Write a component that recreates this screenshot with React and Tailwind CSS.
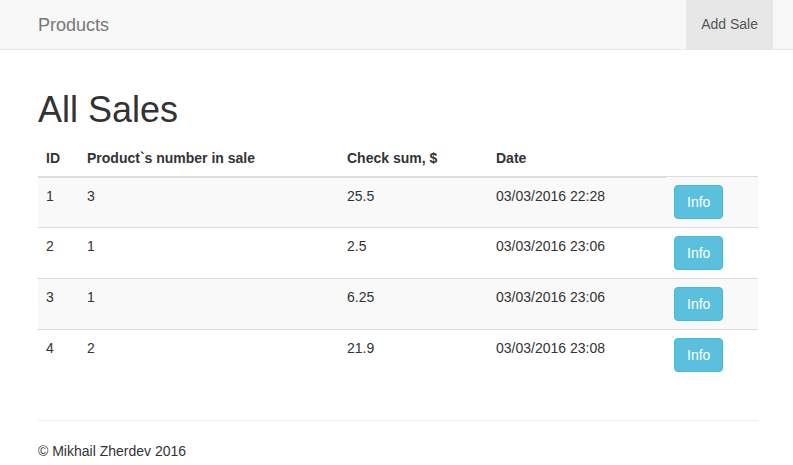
import React from "react";

const sales = [
  { id: 1, count: 3, sum: "25.5", date: "03/03/2016 22:28" },
  { id: 2, count: 1, sum: "2.5", date: "03/03/2016 23:06" },
  { id: 3, count: 1, sum: "6.25", date: "03/03/2016 23:06" },
  { id: 4, count: 2, sum: "21.9", date: "03/03/2016 23:08" },
];

const App = () => {
  return (
    <div className="min-h-[465px] bg-white text-[14px] leading-[20px] text-[#333] font-['Liberation_Sans',Arial,sans-serif]">
      {/* Navbar */}
      <nav className="h-[50px] bg-[#f8f8f8] border-b border-[#e7e7e7] flex justify-between pl-[23px] pr-[20px]">
        <a className="px-[15px] py-[15px] text-[18px] leading-[20px] text-[#777]">Products</a>
        <a className="px-[15px] py-[15px] leading-[19px] text-[#555] bg-[#e7e7e7]">Add Sale</a>
      </nav>

      <div className="ml-[38px] w-[720px] pt-[20px]">
        <h1 className="mt-[20px] mb-[10px] text-[36px] leading-[39.6px] font-normal">All Sales</h1>

        {/* Sales table */}
        <table className="w-full border-collapse">
          <thead>
            <tr>
              <th className="w-[41px] p-[8px] text-left font-bold align-bottom border-b-2 border-[#ddd]">ID</th>
              <th className="w-[260px] p-[8px] text-left font-bold align-bottom border-b-2 border-[#ddd]">Product`s number in sale</th>
              <th className="w-[149px] p-[8px] text-left font-bold align-bottom border-b-2 border-[#ddd]">Check sum, $</th>
              <th className="w-[178px] p-[8px] text-left font-bold align-bottom border-b-2 border-[#ddd]">Date</th>
            </tr>
          </thead>
          <tbody>
            {sales.map((sale, idx) => (
              <tr key={sale.id} className={idx % 2 === 0 ? "bg-[#f9f9f9]" : ""}>
                <td className="p-[8px] align-top border-t border-[#ddd]">{sale.id}</td>
                <td className="p-[8px] align-top border-t border-[#ddd]">{sale.count}</td>
                <td className="p-[8px] align-top border-t border-[#ddd]">{sale.sum}</td>
                <td className="p-[8px] align-top border-t border-[#ddd]">{sale.date}</td>
                <td className="p-[8px] align-top border-t border-[#ddd]">
                  <button className="px-[12px] py-[6px] leading-[20px] text-white bg-[#5bc0de] border border-[#46b8da] rounded-[4px]">
                    Info
                  </button>
                </td>
              </tr>
            ))}
          </tbody>
        </table>

        {/* Footer */}
        <hr className="mt-[40px] mb-[20px] border-0 border-t border-[#eee]" />
        <footer>
          <p>© Mikhail Zherdev 2016</p>
        </footer>
      </div>
    </div>
  );
};

export default App;
